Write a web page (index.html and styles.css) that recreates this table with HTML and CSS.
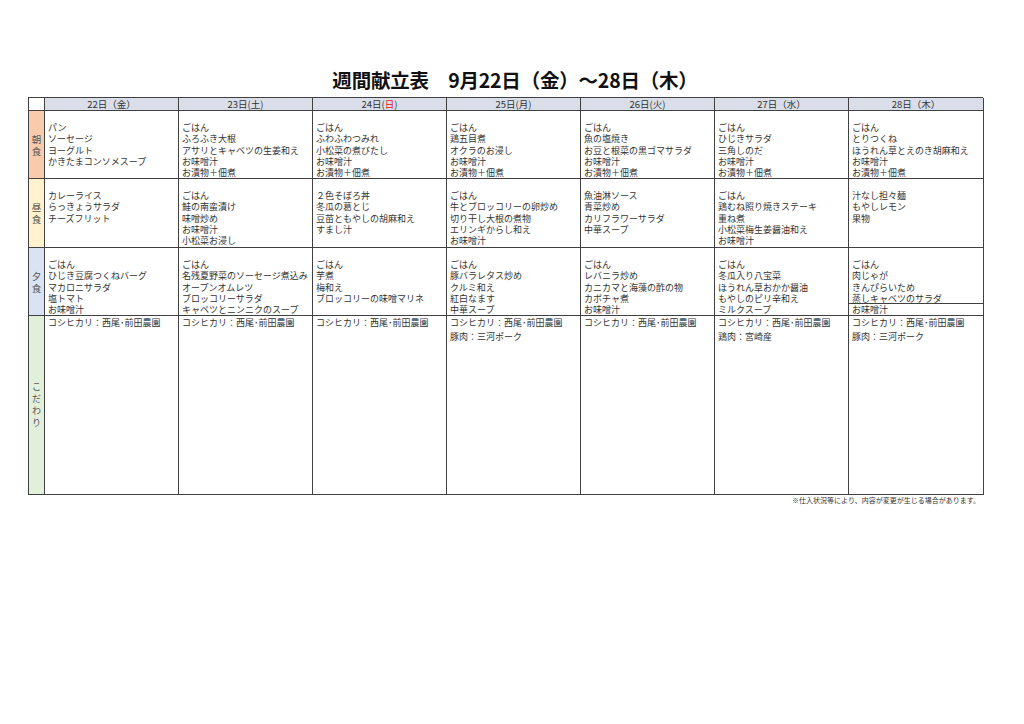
FILE: index.html
```html
<!DOCTYPE html>
<html lang="ja">
<head>
<meta charset="utf-8">
<title>週間献立表</title>
<link rel="stylesheet" href="styles.css">
</head>
<body>
<div class="page">
  <h1 class="title">週間献立表　9月22日（金）～28日（木）</h1>
  <div class="menu">
    <div class="corner"></div>
    <div class="day">22日（金）</div>
    <div class="day">23日(土)</div>
    <div class="day">24日(<span class="sun">日</span>)</div>
    <div class="day">25日(月)</div>
    <div class="day">26日(火)</div>
    <div class="day">27日（水）</div>
    <div class="day">28日（木）</div>

    <div class="label breakfast"><span>朝<br>食</span></div>
    <div class="cell meal"><p>パン</p><p>ソーセージ</p><p>ヨーグルト</p><p>かきたまコンソメスープ</p></div>
    <div class="cell meal"><p>ごはん</p><p>ふろふき大根</p><p>アサリとキャベツの生姜和え</p><p>お味噌汁</p><p>お漬物＋佃煮</p></div>
    <div class="cell meal"><p>ごはん</p><p>ふわふわつみれ</p><p>小松菜の煮びたし</p><p>お味噌汁</p><p>お漬物＋佃煮</p></div>
    <div class="cell meal"><p>ごはん</p><p>鶏五目煮</p><p>オクラのお浸し</p><p>お味噌汁</p><p>お漬物＋佃煮</p></div>
    <div class="cell meal"><p>ごはん</p><p>魚の塩焼き</p><p>お豆と根菜の黒ゴマサラダ</p><p>お味噌汁</p><p>お漬物＋佃煮</p></div>
    <div class="cell meal"><p>ごはん</p><p>ひじきサラダ</p><p>三角しのだ</p><p>お味噌汁</p><p>お漬物＋佃煮</p></div>
    <div class="cell meal"><p>ごはん</p><p>とりつくね</p><p>ほうれん草とえのき胡麻和え</p><p>お味噌汁</p><p>お漬物＋佃煮</p></div>

    <div class="label lunch"><span>昼<br>食</span></div>
    <div class="cell meal"><p>カレーライス</p><p>らっきょうサラダ</p><p>チーズフリット</p></div>
    <div class="cell meal"><p>ごはん</p><p>鮭の南蛮漬け</p><p>味噌炒め</p><p>お味噌汁</p><p>小松菜お浸し</p></div>
    <div class="cell meal"><p>２色そぼろ丼</p><p>冬瓜の葛とじ</p><p>豆苗ともやしの胡麻和え</p><p>すまし汁</p></div>
    <div class="cell meal"><p>ごはん</p><p>牛とブロッコリーの卵炒め</p><p>切り干し大根の煮物</p><p>エリンギからし和え</p><p>お味噌汁</p></div>
    <div class="cell meal"><p>魚油淋ソース</p><p>青菜炒め</p><p>カリフラワーサラダ</p><p>中華スープ</p></div>
    <div class="cell meal"><p>ごはん</p><p>鶏むね照り焼きステーキ</p><p>重ね煮</p><p>小松菜梅生姜醤油和え</p><p>お味噌汁</p></div>
    <div class="cell meal"><p>汁なし担々麺</p><p>もやしレモン</p><p>果物</p></div>

    <div class="label dinner"><span>夕<br>食</span></div>
    <div class="cell meal"><p>ごはん</p><p>ひじき豆腐つくねバーグ</p><p>マカロニサラダ</p><p>塩トマト</p><p>お味噌汁</p></div>
    <div class="cell meal"><p>ごはん</p><p>名残夏野菜のソーセージ煮込み</p><p>オープンオムレツ</p><p>ブロッコリーサラダ</p><p>キャベツとニンニクのスープ</p></div>
    <div class="cell meal"><p>ごはん</p><p>芋煮</p><p>梅和え</p><p>ブロッコリーの味噌マリネ</p></div>
    <div class="cell meal"><p>ごはん</p><p>豚バラレタス炒め</p><p>クルミ和え</p><p>紅白なます</p><p>中華スープ</p></div>
    <div class="cell meal"><p>ごはん</p><p>レバニラ炒め</p><p>カニカマと海藻の酢の物</p><p>カボチャ煮</p><p>お味噌汁</p></div>
    <div class="cell meal"><p>ごはん</p><p>冬瓜入り八宝菜</p><p>ほうれん草おかか醤油</p><p>もやしのピリ辛和え</p><p>ミルクスープ</p></div>
    <div class="cell meal"><p>ごはん</p><p>肉じゃが</p><p>きんぴらいため</p><p>蒸しキャベツのサラダ</p><p class="boxed">お味噌汁</p></div>

    <div class="label origin"><span class="stack">こ<br>だ<br>わ<br>り</span></div>
    <div class="cell source"><p>コシヒカリ：西尾･前田農園</p></div>
    <div class="cell source"><p>コシヒカリ：西尾･前田農園</p></div>
    <div class="cell source"><p>コシヒカリ：西尾･前田農園</p></div>
    <div class="cell source"><p>コシヒカリ：西尾･前田農園</p><p>豚肉：三河ポーク</p></div>
    <div class="cell source"><p>コシヒカリ：西尾･前田農園</p></div>
    <div class="cell source"><p>コシヒカリ：西尾･前田農園</p><p>鶏肉：宮崎産</p></div>
    <div class="cell source"><p>コシヒカリ：西尾･前田農園</p><p>豚肉：三河ポーク</p></div>
  </div>
  <p class="note">※仕入状況等により、内容が変更が生じる場合があります。</p>
</div>
</body>
</html>
```

FILE: styles.css
```css
html, body {
  margin: 0;
  padding: 0;
  background: #ffffff;
}

body {
  font-family: "Noto Sans CJK JP", "Noto Sans", sans-serif;
  color: #333333;
}

.page {
  width: 1024px;
  padding-top: 68px;
}

.title {
  margin: 0 0 5px 0;
  padding-left: 6px;
  text-align: center;
  font-size: 19.5px;
  line-height: 24px;
  font-weight: 700;
  letter-spacing: -0.2px;
  color: #111111;
}

.menu {
  display: grid;
  grid-template-columns: 16px repeat(6, 134px) 135px;
  grid-template-rows: 13px 68px 69px 68px 179px;
  width: 955px;
  margin-left: 28px;
  border-top: 1px solid #404040;
  border-left: 1px solid #404040;
  box-sizing: border-box;
}

.menu > div {
  box-sizing: border-box;
  border-right: 1px solid #404040;
  border-bottom: 1px solid #404040;
  overflow: hidden;
}

.corner {
  background: #ffffff;
}

.menu > .day {
  display: flex;
  align-items: center;
  justify-content: center;
  overflow: visible;
  background: #d9dee8;
  font-size: 9.5px;
  line-height: 11px;
  color: #333333;
}

.sun {
  color: #e02020;
}

.label {
  display: flex;
  align-items: center;
  justify-content: center;
  font-size: 9.5px;
  line-height: 12px;
  color: #555555;
  text-align: center;
}

.breakfast { background: #f8cbad; }
.lunch { background: #fff2cc; }
.dinner { background: #dae3f3; }
.origin { background: #e2efda; }

.stack {
  font-size: 9px;
  line-height: 12px;
}

.cell {
  background: #ffffff;
  font-size: 9px;
  white-space: nowrap;
}

.cell p {
  margin: 0;
}

.meal {
  padding: 11px 3px 0 3px;
  line-height: 11.35px;
}

.source {
  padding: 0 3px;
  line-height: 14px;
}

.boxed {
  margin: 0 -3px !important;
  padding: 0 3px;
  box-shadow: 0 -1px 0 #404040;
}

.note {
  margin: 1px 0 0 0;
  width: 980px;
  text-align: right;
  font-size: 7px;
  line-height: 9px;
  color: #333333;
}
```
